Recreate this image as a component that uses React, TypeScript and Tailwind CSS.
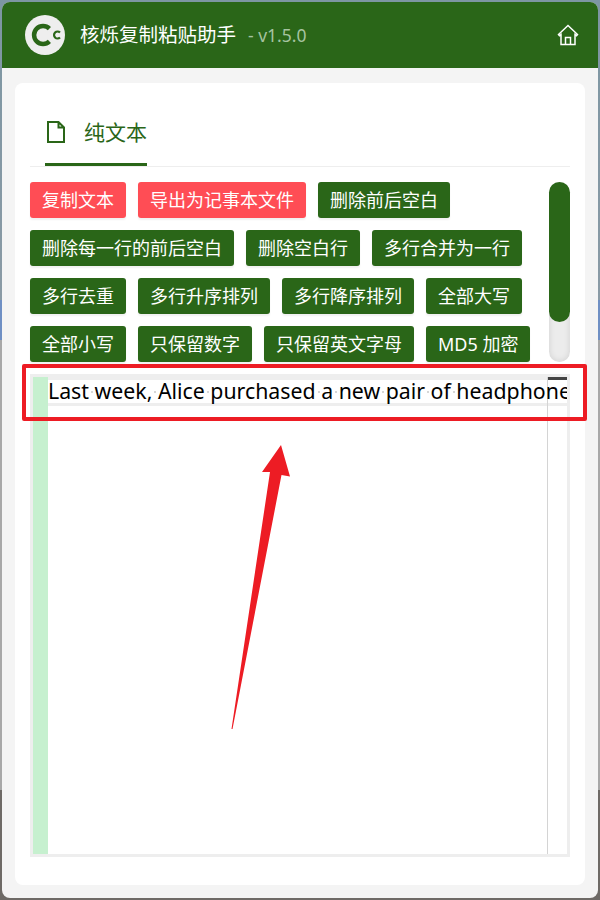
import React from "react";

const buttons = [
  { label: "复制文本", red: true },
  { label: "导出为记事本文件", red: true },
  { label: "删除前后空白" },
  { label: "删除每一行的前后空白" },
  { label: "删除空白行" },
  { label: "多行合并为一行" },
  { label: "多行去重" },
  { label: "多行升序排列" },
  { label: "多行降序排列" },
  { label: "全部大写" },
  { label: "全部小写" },
  { label: "只保留数字" },
  { label: "只保留英文字母" },
  { label: "MD5 加密" },
];

const words = "Last week, Alice purchased a new pair of headphones".split(" ");

const Logo = () => (
  <svg width="40" height="40" viewBox="0 0 40 40" fill="none" stroke="#2a6618">
    <circle cx="20" cy="20" r="20" fill="#eeeeee" stroke="none" />
    <path d="M24.4 13.6A9 9 0 1 0 24.4 26.4" strokeWidth="4.5" />
    <path d="M35 17.5A3.5 3.5 0 1 0 35 22.5" strokeWidth="2.2" />
  </svg>
);

const FileIcon = () => (
  <svg width="18" height="22" viewBox="0 0 18 22" fill="none" stroke="#2a6618" strokeWidth="2">
    <path d="M1 1h10.500l5.500 5.500V21H1zM11.500 1v5.500H17" />
  </svg>
);

const Home = () => (
  <svg width="22" height="22" viewBox="0 0 22 22" fill="none" stroke="#ffffff" strokeWidth="1.500">
    <path d="M11 1.500 1.500 10.500l1 1.200 1.500-1.200V20.500h14V10.500l1.500 1.200 1-1.200zM8.500 20.500V13.500h5V20.500" />
  </svg>
);

export default function App() {
  return (
    <div className="h-[900px] w-[600px] bg-[linear-gradient(180deg,#7d96a3_0,#8a9aa5_300px,#6f8fc4_300px,#6f8fc4_340px,#a8a8a8_340px,#a8a8a8_790px,#6e6a66_790px,#6e6a66_900px)] p-[2px] font-['Noto_Sans','Noto_Sans_CJK_SC',sans-serif]">
      <div className="flex h-[896px] flex-col overflow-hidden rounded-lg bg-[#f4f4f4]">
        <header className="flex h-[66px] shrink-0 items-center bg-[#2a6618] pl-[23px] pr-[19px]">
          <Logo />
          <span className="ml-[15px] text-[19.500px] text-white">核烁复制粘贴助手</span>
          <span className="ml-3 text-[17.500px] text-[#a5c3a0]">- v1.5.0</span>
          <div className="ml-auto">
            <Home />
          </div>
        </header>

        <main className="relative mx-[13px] mb-[13px] mt-[15px] flex flex-1 flex-col rounded-lg bg-white px-[15px]">
          <div className="mt-[17px] flex h-[67px] shrink-0 border-b border-[#eeeeee]">
            <div className="ml-[15px] flex w-[102px] items-center border-b-[3px] border-[#2a6618] text-[#2a6618]">
              <span className="ml-[2px]">
                <FileIcon />
              </span>
              <span className="ml-[19px] pt-0.5 text-[21px]">纯文本</span>
            </div>
          </div>

          <div className="mt-[15px] flex h-[180px] shrink-0 justify-between">
            <div className="flex w-[510px] flex-wrap content-start gap-3">
              {buttons.map((b) => (
                <button
                  key={b.label}
                  className={`h-9 rounded-[3px] px-3 text-lg leading-none text-white shadow-[0_2px_2px_#0000000f] ${b.red ? "bg-[#ff4d55]" : "bg-[#2a6618]"}`}
                >
                  {b.label}
                </button>
              ))}
            </div>
            <div className="h-[180px] w-[21px] rounded-full bg-[#ececec] shadow-[inset_0_0_6px_#0000001f]">
              <div className="h-[140px] rounded-full bg-[#2a6618]" />
            </div>
          </div>

          <div className="mt-3 flex h-[483px] shrink-0 border-[3px] border-[#eeeeee]">
            <div className="w-[15px] shrink-0 bg-[#c6f0cf]" />
            <div className="relative min-w-0 flex-1 overflow-hidden">
              <div className="absolute inset-x-0 top-0 h-[3px] bg-[#eeeeee]" />
              <div className="absolute inset-x-0 top-[26px] h-[3px] bg-[#eeeeee]" />
              <div className="absolute inset-y-0 right-0 w-5 border-l border-[#d4d4d4]">
                <div className="h-[3px] bg-[#444444]" />
              </div>
              <div className="relative whitespace-pre text-[21.300px] leading-[28px] text-black">
                {words.map((w, i) => (
                  <React.Fragment key={i}>
                    {i > 0 && (
                      <span className="relative">
                        {" "}
                        <span className="absolute left-[2px] top-[15px] h-0.5 w-0.5 rounded-full bg-[#c8c8c8]" />
                      </span>
                    )}
                    {w}
                  </React.Fragment>
                ))}
              </div>
            </div>
          </div>

          {/* red box and arrow drawn on top of the screenshot */}
          <div className="absolute left-[7px] top-[281px] h-[57px] w-[565px] rounded-[2px] border-4 border-[#ed1c24]" />
          <svg className="absolute left-[210px] top-[357px]" width="70" height="295" viewBox="0 0 70 295">
            <path d="M56 5 37 32 45 32 6.500 289 7.500 289 56.500 35 65 36.500Z" fill="#ed1c24" />
          </svg>
        </main>
      </div>
    </div>
  );
}
